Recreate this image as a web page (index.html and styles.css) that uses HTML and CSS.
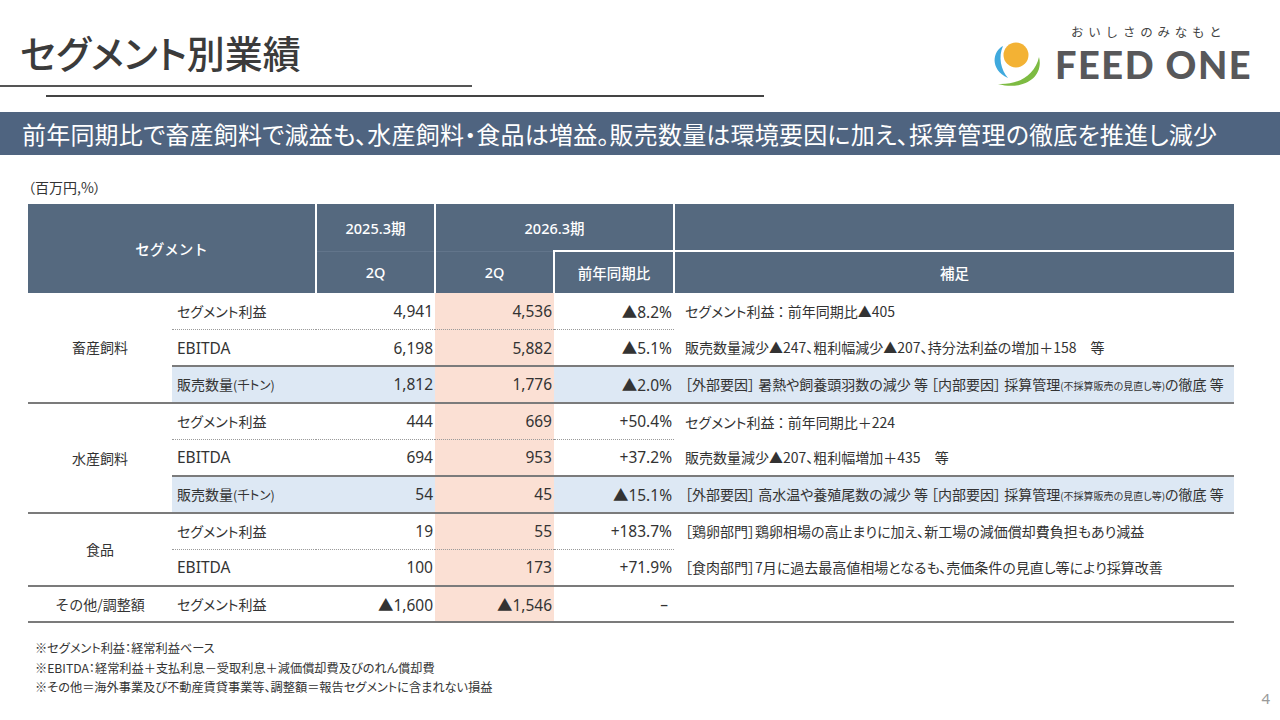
FILE: index.html
```html
<!DOCTYPE html>
<html lang="ja">
<head>
<meta charset="utf-8">
<title>セグメント別業績</title>
<link rel="stylesheet" href="styles.css">
</head>
<body>
<div class="slide">
  <header class="top">
    <div class="heading">
      <h1 class="title">セグメント別業績</h1>
      <div class="rule rule-1"></div>
      <div class="rule rule-2"></div>
    </div>
    <div class="logo">
      <div class="tagline">おいしさのみなもと</div>
      <div class="brand">
        <svg class="mark" width="54" height="50" viewBox="0 0 54 50" aria-hidden="true">
          <path fill="#3fa9dd" d="M14,7 C4,12 0,30 19,39 C12,31 9,18 14,7 Z"/>
          <circle cx="27" cy="16" r="12.5" fill="#f3b234"/>
          <path fill="#7dbb42" d="M50,18 C55,38 35,52 9,45 C30,46 46,36 50,18 Z"/>
        </svg>
        <span class="brand-name">FEED ONE</span>
      </div>
    </div>
  </header>

  <div class="banner">前年同期比で畜産飼料で減益も、水産飼料・食品は増益。販売数量は環境要因に加え、採算管理の徹底を推進し減少</div>

  <main class="content">
    <div class="unit">（百万円,%）</div>
    <table class="seg">
      <colgroup>
        <col class="c-cat"><col class="c-item"><col class="c-num"><col class="c-num"><col class="c-yoy"><col class="c-note">
      </colgroup>
      <thead>
        <tr class="h1">
          <th colspan="2" rowspan="2" class="h-seg">セグメント</th>
          <th class="h-y1">2025.3期</th>
          <th colspan="2" class="h-y2">2026.3期</th>
          <th class="h-blank"></th>
        </tr>
        <tr class="h2">
          <th class="h-q1">2Q</th>
          <th class="h-q2">2Q</th>
          <th class="h-yoy">前年同期比</th>
          <th class="h-note">補足</th>
        </tr>
      </thead>
      <tbody>
        <tr class="r-profit">
          <td class="cat" rowspan="3">畜産飼料</td>
          <td class="item">セグメント利益</td>
          <td class="num">4,941</td>
          <td class="num cur">4,536</td>
          <td class="num yoy">▲8.2%</td>
          <td class="note">セグメント利益 ： 前年同期比▲405</td>
        </tr>
        <tr class="r-ebitda">
          <td class="item"><span class="lat">EBITDA</span></td>
          <td class="num">6,198</td>
          <td class="num cur">5,882</td>
          <td class="num yoy">▲5.1%</td>
          <td class="note">販売数量減少▲247、粗利幅減少▲207、持分法利益の増加＋158　等</td>
        </tr>
        <tr class="r-vol">
          <td class="item">販売数量<span class="small-p">(千トン)</span></td>
          <td class="num">1,812</td>
          <td class="num cur">1,776</td>
          <td class="num yoy">▲2.0%</td>
          <td class="note">［外部要因］ 暑熱や飼養頭羽数の減少 等 ［内部要因］ 採算管理<span class="tiny">(不採算販売の見直し等)</span>の徹底 等</td>
        </tr>

        <tr class="r-profit group">
          <td class="cat" rowspan="3">水産飼料</td>
          <td class="item">セグメント利益</td>
          <td class="num">444</td>
          <td class="num cur">669</td>
          <td class="num yoy">+50.4%</td>
          <td class="note">セグメント利益 ： 前年同期比＋224</td>
        </tr>
        <tr class="r-ebitda">
          <td class="item"><span class="lat">EBITDA</span></td>
          <td class="num">694</td>
          <td class="num cur">953</td>
          <td class="num yoy">+37.2%</td>
          <td class="note">販売数量減少▲207、粗利幅増加＋435　等</td>
        </tr>
        <tr class="r-vol">
          <td class="item">販売数量<span class="small-p">(千トン)</span></td>
          <td class="num">54</td>
          <td class="num cur">45</td>
          <td class="num yoy">▲15.1%</td>
          <td class="note">［外部要因］ 高水温や養殖尾数の減少 等 ［内部要因］ 採算管理<span class="tiny">(不採算販売の見直し等)</span>の徹底 等</td>
        </tr>

        <tr class="r-profit group">
          <td class="cat" rowspan="2">食品</td>
          <td class="item">セグメント利益</td>
          <td class="num">19</td>
          <td class="num cur">55</td>
          <td class="num yoy">+183.7%</td>
          <td class="note">［鶏卵部門］鶏卵相場の高止まりに加え、新工場の減価償却費負担もあり減益</td>
        </tr>
        <tr class="r-ebitda">
          <td class="item"><span class="lat">EBITDA</span></td>
          <td class="num">100</td>
          <td class="num cur">173</td>
          <td class="num yoy">+71.9%</td>
          <td class="note">［食肉部門］7月に過去最高値相場となるも、売価条件の見直し等により採算改善</td>
        </tr>

        <tr class="r-other group last">
          <td class="cat">その他/調整額</td>
          <td class="item">セグメント利益</td>
          <td class="num">▲1,600</td>
          <td class="num cur">▲1,546</td>
          <td class="num yoy dash">–</td>
          <td class="note"></td>
        </tr>
      </tbody>
    </table>

    <div class="notes">
      <p>※セグメント利益：経常利益ベース</p>
      <p>※EBITDA：経常利益＋支払利息－受取利息＋減価償却費及びのれん償却費</p>
      <p>※その他＝海外事業及び不動産賃貸事業等、調整額＝報告セグメントに含まれない損益</p>
    </div>
  </main>

  <div class="pageno">4</div>
</div>
</body>
</html>
```

FILE: styles.css
```css
* { box-sizing: border-box; }

html, body {
  margin: 0;
  padding: 0;
  background: #ffffff;
}

body {
  font-family: "Noto Sans CJK JP", "Noto Sans", sans-serif;
  color: #333333;
}

.slide {
  position: relative;
  width: 1280px;
  height: 720px;
  overflow: hidden;
  background: #ffffff;
}

/* ---------- header ---------- */
.top {
  display: flex;
  justify-content: space-between;
  align-items: flex-start;
  height: 112px;
}

.heading {
  width: 770px;
}

.title {
  margin: 33px 0 0 20px;
  font-size: 38px;
  line-height: 38px;
  font-weight: 500;
  color: #3b3b3b;
  font-feature-settings: "palt";
  letter-spacing: 0;
}

.rule {
  height: 2px;
  background: #555555;
}

.rule-1 {
  width: 472px;
  margin-top: 14px;
}

.rule-2 {
  width: 718px;
  margin-left: 46px;
  margin-top: 8px;
  background: #444444;
}

.logo {
  margin: 22px 30px 0 0;
  width: 261px;
}

.tagline {
  padding-left: 82px;
  font-size: 12.5px;
  line-height: normal;
  letter-spacing: 4.8px;
  color: #444444;
  white-space: nowrap;
}

.brand {
  display: flex;
  align-items: flex-start;
}

.mark {
  display: block;
  flex: none;
  margin-top: -2px;
}

.brand-name {
  margin-left: 12px;
  font-family: "Lato", "Open Sans", sans-serif;
  font-weight: 900;
  font-size: 38px;
  line-height: normal;
  letter-spacing: 1.5px;
  color: #58585a;
  white-space: nowrap;
}

/* ---------- banner ---------- */
.banner {
  height: 43px;
  background: #4f6480;
  color: #ffffff;
  font-size: 24px;
  line-height: 43px;
  padding-left: 22px;
  white-space: nowrap;
  letter-spacing: 0.2px;
  font-feature-settings: "palt";
}

/* ---------- content ---------- */
.content {
  padding: 0 0 0 28px;
}

.unit {
  margin-top: 23px;
  font-size: 14px;
  line-height: 19px;
  color: #333333;
  font-feature-settings: "palt";
}

.seg {
  margin-top: 7px;
  width: 1206px;
  table-layout: fixed;
  border-collapse: collapse;
  font-size: 14px;
  color: #333333;
}

.c-cat { width: 144px; }
.c-item { width: 144px; }
.c-num { width: 119px; }
.c-yoy { width: 120px; }
.c-note { width: 560px; }

.seg th {
  background: #55697f;
  color: #ffffff;
  font-family: "Noto Sans", "Noto Sans CJK JP", sans-serif;
  font-weight: 500;
  font-size: 14.5px;
  padding: 0;
  text-align: center;
  vertical-align: middle;
}

.seg .h1 { height: 47px; }
.seg .h2 { height: 42px; }

.h-seg { border-right: 2px solid #ffffff; }
.h-y1 { border-right: 2px solid #ffffff; border-bottom: 1px solid #62758b; }
.h-y2 { border-right: 2px solid #ffffff; border-bottom: 1px solid #62758b; }
.h-blank { border-bottom: 2px solid #ffffff; }
.h-q1 { border-right: 2px solid #ffffff; }
.h-q2 { border-right: 2px solid #ffffff; }
.h-yoy { border-right: 2px solid #ffffff; border-top: 2px solid #ffffff; }
.h-note { border-top: 2px solid #ffffff; }

.seg td {
  height: 36.6px;
  padding: 0;
  vertical-align: middle;
  white-space: nowrap;
}

.seg td.cat {
  text-align: center;
  background: #ffffff;
}

.seg td.item {
  padding-left: 5px;
  font-feature-settings: "palt";
}

.seg td.num {
  text-align: right;
  padding-right: 2px;
  font-family: "Noto Sans", "Noto Sans CJK JP", sans-serif;
  font-size: 15.5px;
}

.seg td.dash {
  padding-right: 6px;
}

.seg td.cur {
  background: #fbe0d4;
}

.seg td.note {
  padding-left: 11px;
  font-feature-settings: "palt";
}

.lat {
  font-family: "Noto Sans", sans-serif;
  font-size: 15.5px;
}

.small-p {
  font-size: 12.5px;
}

.tiny {
  font-size: 10px;
}

/* row separators */
.r-profit td.item,
.r-profit td.num {
  border-bottom: 1px dotted #9a9a9a;
}

.r-vol td {
  background: #dde8f4;
  border-top: 2px solid #7b7b7b;
}

.r-vol td.cur {
  background: #fbe0d4;
}

.group td {
  border-top: 2px solid #7b7b7b;
}

.last td {
  border-bottom: 2px solid #7b7b7b;
}

.r-other td.item,
.r-other td.num {
  border-bottom: 2px solid #7b7b7b;
}

/* ---------- notes ---------- */
.notes {
  margin-top: 16px;
  padding-left: 7px;
  font-size: 12.2px;
  line-height: 19.5px;
  color: #333333;
  font-feature-settings: "palt";
}

.notes p {
  margin: 0;
}

.pageno {
  position: absolute;
  right: 10px;
  bottom: 12px;
  font-family: "Noto Sans", sans-serif;
  font-size: 15px;
  color: #9a9a9a;
}
```
